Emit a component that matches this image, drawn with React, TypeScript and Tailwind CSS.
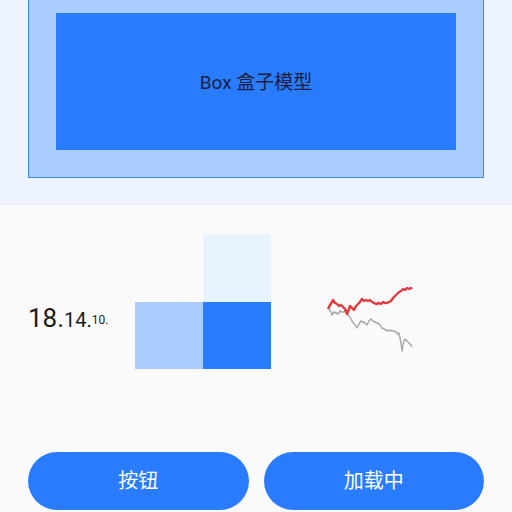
const RED = "328,304 330,300 332,297 333,295 335,298 337,299 339,301 341,300 343,302 345,304 347,309 349,304 350,301 352,303 354,305 356,301 358,299 360,297 362,294 364,296 366,295 368,296 370,295 372,297 374,298 376,299 379,298 381,299 383,297 385,298 387,298 389,297 391,296 393,293 395,291 397,289 399,287 401,286 403,284 405,285 407,283 409,284 411,283 412,284"
const GRAY = "329,304 331,307 332,310 334,307 336,308 338,309 340,306 342,307 344,307 346,304 348,310 350,312 352,316 354,319 356,321 357,323 359,319 361,316 363,317 365,318 367,320 369,316 371,314 373,316 375,317 377,318 379,319 381,321 382,323 384,324 386,325 388,326 390,325 392,326 394,326 396,327 397,329 399,328 400,333 401,338 402,346 403,340 404,336 405,334 407,336 409,338 411,340 412,342"

export default function App() {
  return (
    <div className="w-[512px] h-[512px] overflow-hidden bg-[#fafafa]" style={{ fontFamily: "Roboto, 'Noto Sans CJK SC', sans-serif" }}>
      {/* Box model */}
      <div className="h-[205px] bg-[#ecf3ff] overflow-hidden">
        <div className="mx-[28px] mt-[-15px] border border-[#3d86f0] bg-[#aaccff] p-[27px]">
          <div className="h-[137px] pt-[4px] bg-[#297cff] flex items-center justify-center text-[19px] text-[#1b1f3b]">
            Box 盒子模型
          </div>
        </div>
      </div>

      {/* Middle row */}
      <div className="h-[247px] flex items-start pt-[29px]">
        <div className="ml-[28px] mt-[71px] w-[107px] text-[#1b1b1b] leading-none whitespace-nowrap">
          <span className="text-[26px]">18.</span>
          <span className="text-[20px]">14.</span>
          <span className="text-[12px] align-[3px]">10.</span>
        </div>
        <div className="grid grid-cols-[68px_68px] grid-rows-[68px_67px]">
          <div />
          <div className="bg-[#e9f2ff]" />
          <div className="bg-[#aaccff]" />
          <div className="bg-[#297cff]" />
        </div>
        <svg className="ml-[55px] mt-[49px]" width="90" height="74" viewBox="326 278 90 74">
          <polyline points={GRAY} fill="none" stroke="#a6a6a6" strokeWidth="1.4" strokeLinejoin="round" />
          <polyline points={RED} fill="none" stroke="#e0393e" strokeWidth="2.4" strokeLinejoin="round" />
        </svg>
      </div>

      {/* Buttons */}
      <div className="flex gap-[15px] px-[28px]">
        <button className="flex-1 h-[58px] rounded-full bg-[#297cff] text-white text-[20px]">按钮</button>
        <button className="flex-1 h-[58px] rounded-full bg-[#297cff] text-white text-[20px]">加载中</button>
      </div>
    </div>
  )
}
